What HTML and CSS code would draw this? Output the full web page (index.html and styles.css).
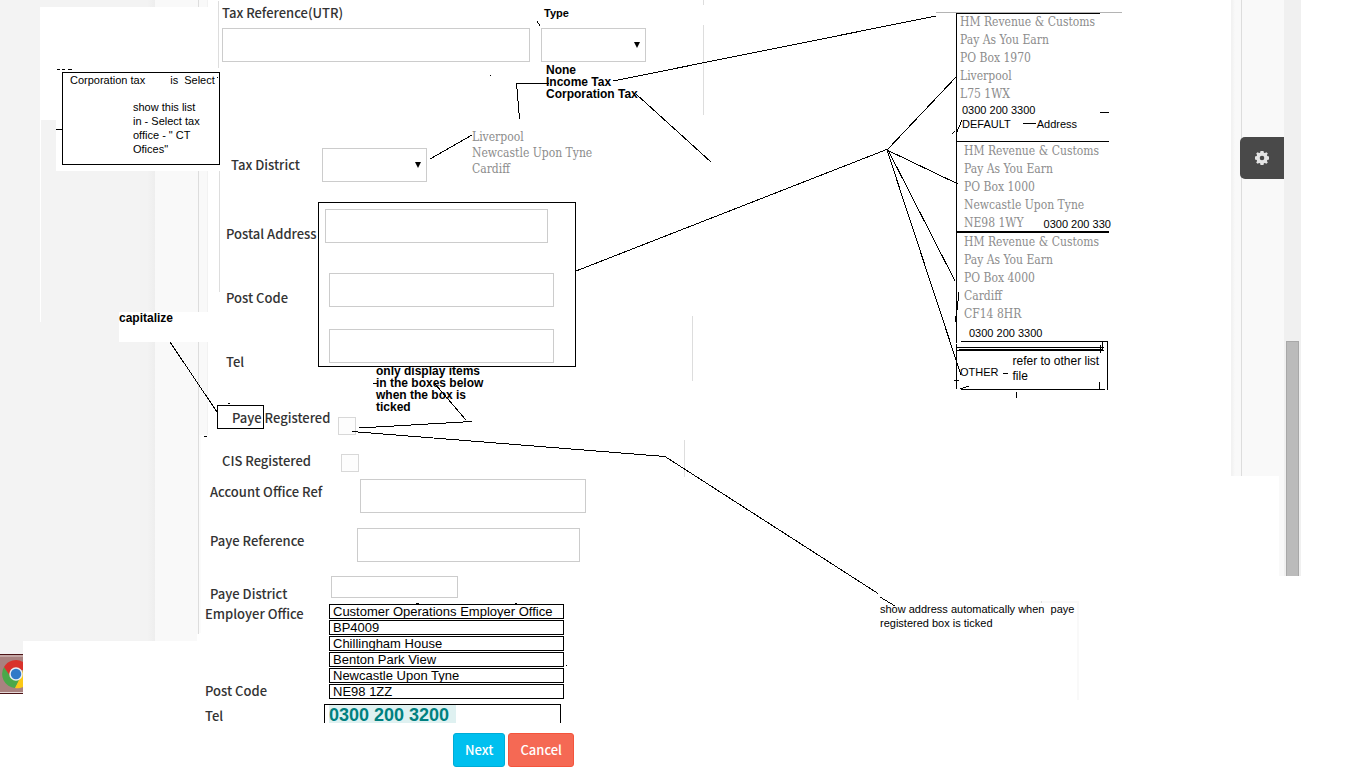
FILE: index.html
```html
<!DOCTYPE html>
<html lang="en">
<head>
<meta charset="utf-8">
<title>Tax details form with notes</title>
<link rel="stylesheet" href="styles.css">
</head>
<body>
<div class="board">
  <div class="shell">
    <aside class="side"></aside>
    <div class="gutter"></div>
    <main class="main">
      <form class="form">
        <div class="row row-tax">
          <div class="stack stack-wide">
            <label for="utr">Tax Reference(UTR)</label>
            <input class="field" id="utr" type="text">
          </div>
          <div class="stack">
            <label class="label-bold" for="type">Type</label>
            <span class="pick"><select class="field" id="type"></select></span>
            <ul class="options">
              <li>None</li>
              <li>Income Tax</li>
              <li>Corporation Tax</li>
            </ul>
          </div>
        </div>
        <div class="row row-district">
          <label for="district">Tax District</label>
          <span class="pick"><select class="field" id="district"></select></span>
        </div>
        <div class="row row-postal">
          <div class="postal-labels">
            <label for="postal">Postal Address</label>
            <label for="postcode">Post Code</label>
            <label for="tel">Tel</label>
          </div>
          <div class="frame">
            <input class="field" id="postal" type="text">
            <input class="field indent" id="postcode" type="text">
            <input class="field indent" id="tel" type="text">
          </div>
        </div>
        <div class="row row-paye">
          <label for="paye">Paye Registered</label>
          <input class="tick" id="paye" type="checkbox">
        </div>
        <div class="row row-cis">
          <label for="cis">CIS Registered</label>
          <input class="tick" id="cis" type="checkbox">
        </div>
        <div class="row row-account">
          <label for="account">Account Office Ref</label>
          <input class="field" id="account" type="text">
        </div>
        <div class="row row-reference">
          <label for="reference">Paye Reference</label>
          <input class="field" id="reference" type="text">
        </div>
        <div class="row row-paye-district">
          <label for="paye-district">Paye District</label>
          <input class="field" id="paye-district" type="text">
        </div>
        <div class="row row-office">
          <div class="office-labels">
            <label for="office">Employer Office</label>
            <label for="office-code">Post Code</label>
          </div>
          <div class="office">
            <input id="office" type="text" value="Customer Operations Employer Office">
            <input type="text" aria-label="Address line 2" value="BP4009">
            <input type="text" aria-label="Address line 3" value="Chillingham House">
            <input type="text" aria-label="Address line 4" value="Benton Park View">
            <input type="text" aria-label="Address line 5" value="Newcastle Upon Tyne">
            <input id="office-code" type="text" value="NE98 1ZZ">
          </div>
        </div>
        <div class="row row-phone">
          <label for="office-tel">Tel</label>
          <div class="phone"><input id="office-tel" type="text" value="0300 200 3200"></div>
        </div>
        <div class="actions">
          <button class="btn btn-next" type="button">Next</button>
          <button class="btn btn-cancel" type="button">Cancel</button>
        </div>
      </form>
    </main>
    <div class="edge">
      <button class="gear" type="button" aria-label="Settings">
        <svg width="16" height="16" viewBox="0 0 16 16"><path fill="#e4e4e4" fill-rule="evenodd" d="M6.500 1h3l.4 1.700 1 .4 1.500-.9 1.400 1.400-.9 1.500.4 1 1.700.4v3l-1.700.4-.4 1 .9 1.500-1.400 1.400-1.500-.9-1 .4-.4 1.700h-3l-.4-1.700-1-.4-1.500.9-1.400-1.400.9-1.500-.4-1L1 9.500v-3l1.700-.4.4-1-.9-1.500 1.400-1.400 1.500.9 1-.4zM8 5.700a2.300 2.300 0 1 0 0 4.600 2.300 2.300 0 0 0 0-4.600z"/></svg>
      </button>
    </div>
    <div class="track"><div class="thumb"></div></div>
  </div>

  <svg class="patches" width="1366" height="768" viewBox="0 0 1366 768" aria-hidden="true">
    <rect x="199" y="0" width="9" height="435" fill="#f9f9f9"/>
    <rect x="207" y="0" width="1" height="435" fill="#f2f2f2"/>
    <rect x="199" y="435" width="2" height="198" fill="#fbfbfb"/>
    <path fill="#fff" d="M40 7h179v61h-163v52H40zM56 68h164v103H56zM40 120h1v202h-1zM119 312h90v30h-90zM197 634h3v8h-3z"/>
    <path fill="none" stroke="#ddd" d="M218.500 1v67M219.500 171v121M703.500 0v5M703.500 25v90M692.500 316v65M684.500 440v37"/>
    <path fill="#f9f9f9" d="M1279 476h5v100h-5zM1031 601h48v99h-2v-97h-46z"/>
    <path fill="#ddd" d="M1041 601h1v2h-1z"/>
    <g>
      <rect x="0" y="654" width="23" height="40" fill="#a98280"/>
      <path fill="#c3a5a3" d="M0 655h23v2H0z"/><path fill="#e6d9d8" d="M0 692h23v1H0z"/>
      <path fill="#4c1417" d="M0 654h23v1H0zM0 693h23v1H0z"/>
      <path fill="#4aa84a" d="M4 667A14 14 0 0 0 15 688l5-9-9-3z"/>
      <path fill="#d9322b" d="M4 667a14 14 0 0 1 19-5v8h-8l-5 6z"/>
      <path fill="#fbc916" d="M15 688l5-10 3-8v17q-4 2-8 1z"/>
      <circle cx="16" cy="674" r="6" fill="#3179c8" stroke="#e9edf2" stroke-width="1.500"/>
    </g>
  </svg>

  <div class="note note-corp">
    <p class="note-top"><span>Corporation tax</span><span>is</span><span>Select</span></p>
    <p class="note-body">show this list<br>in - Select tax<br>office - " CT<br>Ofices"</p>
  </div>
  <p class="note bold note-capitalize">capitalize</p>
  <p class="note bold note-items">only display items<br>in the boxes below<br>when the box is<br>ticked</p>
  <p class="note note-auto">show address automatically when&nbsp; paye<br>registered box is ticked</p>
  <ul class="note slab note-towns">
    <li>Liverpool</li>
    <li>Newcastle Upon Tyne</li>
    <li>Cardiff</li>
  </ul>

  <section class="note offices">
    <div class="card card-first">
      <p class="slab">HM Revenue &amp; Customs<br>Pay As You Earn<br>PO Box 1970<br>Liverpool<br>L75 1WX</p>
      <p class="line">0300 200 3300</p>
      <p class="line pair"><span>DEFAULT</span><span>Address</span></p>
    </div>
    <div class="card card-second">
      <p class="slab">HM Revenue &amp; Customs<br>Pay As You Earn<br>PO Box 1000<br>Newcastle Upon Tyne</p>
      <p class="slab last"><span>NE98 1WY</span><span class="phone-no">0300 200 330</span></p>
    </div>
    <div class="card card-third">
      <p class="slab">HM Revenue &amp; Customs<br>Pay As You Earn<br>PO Box 4000<br>Cardiff<br>CF14 8HR</p>
      <p class="line">0300 200 3300</p>
    </div>
    <div class="other"><span class="other-name">OTHER</span><span class="other-text">refer to other list<br>file</span></div>
  </section>

  <svg class="marks" width="1366" height="768" viewBox="0 0 1366 768" aria-hidden="true">
    <path stroke="#b4b4b4" d="M936 12.500h186"/>
    <path d="M956 13.500h144"/>
    <path d="M56 129.500h6M57 69.500h3M62 69.500h3M68 69.500h4M217 77.500h1M490 75.500h1"/>
    <path d="M537 21l3 5M549 83.500h-33M516.500 83l3 36M613 81L936 16M636 94l75 68M430 159l42-24"/>
    <path d="M576 271l312-122M888 149l69-73M887 150l71 34M888 150l67 131M887 150l74 225"/>
    <path d="M170 342l47 70M217.500 405.500h46v23h-46zM229 403.500h1M204 436l3 1M228 403.500h2"/>
    <path d="M435 384l31 36M472 421.500L359 428M352 431.500l313 25 213 137M880 597l15 9M373 383.500h4"/>
    <path d="M952 134l3-3M956 134l6-14M1023 123.500h13M1100 112.500h9M959 292l-3 28M955 316v6M575 202v2"/>
    <path d="M1003 373.500h5M961 341.500h147M956.500 347.500h147M956.500 350.500h147M959 349.500h143M1102.500 341v9M1107.500 342v48M956.500 344v45M954 380.500h5M961 389.500h144M960 389l9-3M1099.500 382v8M1016.500 392v6M1100 345v8"/>
    <path d="M566 665.500h1M416 603.500h3M515 603.500h2"/>
  </svg>
</div>
</body>
</html>
```
FILE: styles.css
```css
* { box-sizing: border-box; }

body {
  margin: 0;
  background: #fff;
  color: #333;
  font-family: "Noto Sans CJK SC", "Open Sans", sans-serif;
  font-size: 13px;
  font-weight: 500;
  line-height: 20px;
}

p, ul { margin: 0; padding: 0; list-style: none; }

.board { position: relative; min-height: 100vh; overflow: hidden; }

.shell {
  display: grid;
  grid-template-columns: 155px 44px 1fr 53px 17px 65px;
  align-items: start;
}

.side {
  min-height: 654px;
  background: linear-gradient(to right, #f3f3f3 95%, #eeeeee);
}
.gutter { min-height: 641px; background: #f9f9f9; border-right: 1px solid #ddd; }
.side { clip-path: polygon(0 0, 100% 0, 100% 641px, 23px 641px, 23px 100%, 0 100%); }

.main { position: relative; z-index: 2; padding: 3px 0 0 6px; }

.edge {
  display: flex;
  justify-content: flex-end;
  min-height: 476px;
  padding-top: 137px;
  background: linear-gradient(to right, #f2f2f2 1px, #f9f9f9 4px, #f9f9f9 10px, #ddd 10px, #ddd 11px, #f9f9f9 11px);
}
.gear {
  width: 44px;
  height: 42px;
  padding: 0;
  border: 0;
  border-radius: 5px 0 0 5px;
  background: #494949;
}
.gear svg { display: block; margin: 0 auto; }

.track { min-height: 576px; padding: 341px 2px 0; background: #f0f0f0; }
.thumb { height: 235px; background: #bbb; border: 1px solid #a8a8a8; border-bottom: 0; }

.patches, .marks { position: absolute; top: 0; left: 0; }
.patches { z-index: 1; }
.marks {
  z-index: 4;
  fill: none;
  stroke: #000;
  shape-rendering: crispEdges;
  pointer-events: none;
}

/* Form */
.form { display: flex; flex-direction: column; }
.row { display: grid; align-items: start; justify-content: start; }
.label-bold { font: bold 11px/20px "Liberation Sans", Arial, sans-serif; color: #000; padding-left: 3px; }

.field {
  display: block;
  width: 100%;
  height: 34px;
  margin: 0;
  padding: 0 8px;
  border: 1px solid #ccc;
  border-radius: 0;
  background: #fff;
  font: inherit;
  appearance: none;
}

.pick { position: relative; display: block; width: 105px; }
.pick::after {
  content: "";
  position: absolute;
  top: 14px;
  right: 6px;
  border: 3px solid transparent;
  border-top: 6px solid #000;
  border-bottom: 0;
}

.row-tax { grid-template-columns: 308px 105px; column-gap: 11px; padding-left: 17px; }
.stack { display: grid; row-gap: 5px; align-content: start; }
.options {
  margin-top: -3px;
  padding-left: 5px;
  font: bold 12px/12px "Liberation Sans", Arial, sans-serif;
  color: #000;
  white-space: nowrap;
}

.row-district { grid-template-columns: 91px 105px; align-items: center; margin-top: 48px; padding-left: 26px; }

.row-postal { grid-template-columns: 92px 258px; margin-top: 20px; padding-left: 21px; }
.postal-labels { display: grid; row-gap: 44px; padding-top: 22px; }
.frame { display: grid; padding: 6px 20px 3px 6px; border: 1px solid #000; }
.frame .field { width: 223px; }
.frame .indent { margin-left: 4px; width: 225px; }
#postcode { margin-top: 30px; }
#tel { margin-top: 22px; }

.tick {
  width: 18px;
  height: 18px;
  margin: 0;
  align-self: end;
  border: 1px solid #d8d8d8;
  background: #fdfdfd;
  appearance: none;
}
.row-paye { grid-template: 27px / 106px 18px; margin-top: 36px; padding-left: 27px; }
.row-cis { grid-template: 21px / 119px 18px; margin-top: 16px; padding-left: 17px; }
.row-account { grid-template-columns: 150px 226px; margin-top: 7px; padding-left: 5px; }
.row-reference { grid-template-columns: 147px 223px; margin-top: 15px; padding-left: 5px; }
.row-account label, .row-reference label { padding-top: 3px; }
.row-paye-district { grid-template-columns: 121px 127px; margin-top: 14px; padding-left: 5px; }
.row-paye-district label { padding-top: 8px; }
.row-paye-district .field { height: 22px; }

.row-office { grid-template-columns: 124px 235px; }
.office-labels { display: grid; row-gap: 57px; }
.office { display: grid; row-gap: 1px; }
.office input {
  width: 100%;
  height: 15px;
  padding: 0 3px;
  border: 1px solid #000;
  font: 13px/13px "Liberation Sans", Arial, sans-serif;
  color: #000;
}

.row-phone { grid-template-columns: 119px 237px; margin-top: 3px; }
.row-phone label { padding-top: 2px; }
.phone { padding: 0 4px; border: 1px solid #000; border-bottom: 0; }
.phone input {
  display: block;
  width: 127px;
  height: 18px;
  padding: 2px 0 0;
  border: 0;
  background: #dff1f1;
  color: #008080;
  font: bold 18px/16px "Liberation Sans", Arial, sans-serif;
}

.actions { display: flex; gap: 3px; margin-top: 7px; padding-left: 248px; }
.btn {
  height: 34px;
  padding: 0 11px;
  border: 1px solid;
  border-radius: 3px;
  color: #fff;
  font: inherit;
}
.btn-next { background: #00c0ef; border-color: #00acd6; }
.btn-cancel { background: #f56954; border-color: #f4543c; }

/* Notes laid over the form */
.note {
  position: absolute;
  z-index: 3;
  color: #000;
  font: 11px/14px "Liberation Sans", Arial, sans-serif;
  white-space: nowrap;
}
.bold { font-size: 12px; font-weight: bold; line-height: 12px; }
.slab {
  color: #8c8c8c;
  font: 12px/18px "DejaVu Serif Condensed", "DejaVu Serif", serif;
}

.note-corp { top: 72px; left: 62px; width: 158px; height: 93px; border: 1px solid #000; }
.note-top { display: flex; padding-left: 7px; }
.note-top span:nth-child(2) { margin-left: 25px; }
.note-top span:nth-child(3) { margin-left: 6px; }
.note-body { padding: 13px 0 0 70px; }
.note-capitalize { top: 312px; left: 119px; }
.note-items { top: 365px; left: 376px; }
.note-auto { top: 602px; left: 880px; }
.note-towns { top: 129px; left: 472px; line-height: 16px; }

.offices { top: 12px; left: 956px; width: 153px; }
.card { border-top: 1px solid #000; border-left: 1px solid #000; }
.card-first { height: 129px; border-top-color: transparent; padding-left: 3px; }
.card-first .line { padding-left: 2px; line-height: 14px; }
.card-second { height: 90px; padding-left: 7px; }
.card-third { height: 112px; border-top-width: 2px; padding-left: 7px; }
.card-third .line { padding: 3px 0 0 5px; }
.pair { display: flex; gap: 26px; }
.last { display: flex; gap: 20px; }
.phone-no { color: #000; font: 11px/20px "Liberation Sans", Arial, sans-serif; }
.other { display: flex; padding: 11px 0 0 4px; }
.other-name { padding-top: 11px; }
.other-text { margin-left: 14px; font-size: 12px; line-height: 15px; }
```
